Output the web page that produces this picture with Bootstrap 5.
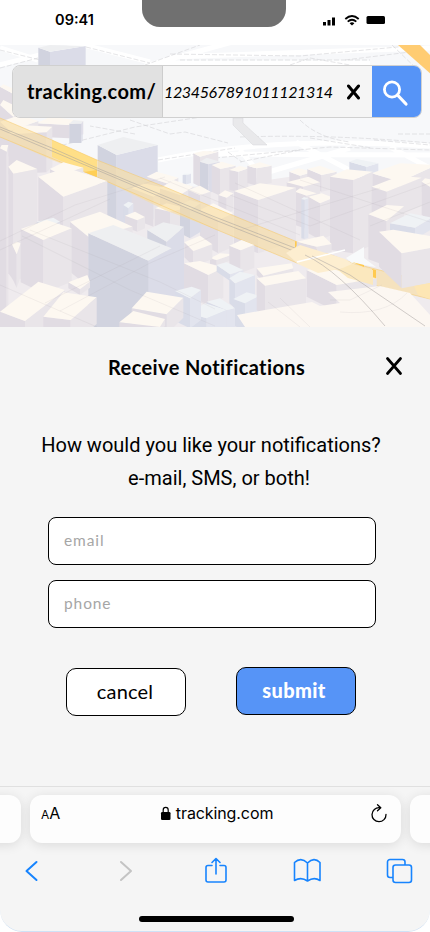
<!DOCTYPE html>
<html lang="en">
<head>
    <meta charset="UTF-8">
    <meta name="viewport" content="width=device-width, initial-scale=1.0">
    <title>Receive Notifications</title>
    <link href="https://cdn.jsdelivr.net/npm/bootstrap@5.3.0/dist/css/bootstrap.min.css" rel="stylesheet">
    <style>
        body {
            background-color: #fff;
            color: #000;
            font-family: Lato, "Liberation Sans", sans-serif;
        }
        .phone {
            width: 430px;
            height: 932px;
            border-radius: 0 0 22px 22px;
            background-color: #f5f5f5;
        }
        .status-bar {
            height: 45px;
            background-color: #fff;
        }
        .clock {
            width: 142px;
            padding-left: 7px;
            font: 600 14.5px/39px Inter, sans-serif;
        }
        .notch {
            width: 144px;
            height: 27px;
            background-color: #707070;
            border-radius: 0 0 18px 18px;
        }
        .signals {
            padding: 14px 44px 0 0;
        }
        .map-area {
            height: 282px;
            background-color: #f7f8fa;
        }
        .map-area > svg {
            display: block;
        }
        .search-bar {
            top: 20px;
            left: 12px;
            width: 410px;
            height: 53px;
            border: 1px solid #d0d0d0;
            border-radius: 8px;
            background-color: #f5f5f5;
        }
        .site-prefix {
            width: 150px;
            padding: 0 0 2px 14px;
            background-color: #e1e1e1;
            border-right: 1px solid #cdcdcd;
            font-size: 20px;
            font-weight: 700;
            letter-spacing: 0.4px;
        }
        .tracking-no {
            width: 183px;
            padding-left: 1px;
            font-size: 16px;
            font-style: italic;
            letter-spacing: -0.36px;
        }
        .search-btn {
            width: 49px;
            background-color: #5694f7;
        }
        .sheet {
            height: 459px;
        }
        .sheet-title {
            height: 80px;
            padding-left: 108px;
            padding-right: 27px;
            font-size: 20px;
            font-weight: 700;
            letter-spacing: 0.02em;
            line-height: 80px;
        }
        .sheet-title span {
            font-variant-ligatures: none;
        }
        .question {
            padding-top: 22px;
            font: 400 20px/33px Roboto, sans-serif;
        }
        .fields {
            padding: 22px 54px 0 48px;
            gap: 15px;
        }
        .fields .form-control {
            height: 48px;
            padding: 0 15px 2px;
            border: 1px solid #000;
            border-radius: 8px;
            font-size: 15.5px;
            letter-spacing: 0.9px;
        }
        .fields .form-control::placeholder {
            color: #a6a6a6;
        }
        .actions {
            padding: 39px 74px 0 66px;
        }
        .actions .btn {
            width: 120px;
            height: 48px;
            padding: 0 0 3px;
            border: 1px solid #000;
            border-radius: 10px;
            font-size: 20px;
        }
        .actions .btn-cancel {
            margin-top: 1px;
            padding-right: 2px;
            background-color: #fff;
            color: #000;
            letter-spacing: 0.2px;
        }
        .actions .btn-submit {
            padding-right: 4px;
            background-color: #5694f7;
            color: #fff;
            font-weight: 900;
            letter-spacing: 0.4px;
        }
        .browser-bar {
            height: 146px;
            border-top: 1px solid #e0e0e0;
            border-bottom: 1px solid #cfe2f7;
            border-radius: 0 0 22px 22px;
        }
        .tabs-row {
            gap: 9px;
            margin: 8px -29px 0;
        }
        .tab-card {
            width: 371px;
            height: 48px;
            border-radius: 12px;
            background-color: #fdfdfd;
            box-shadow: 0 2px 12px rgba(0, 0, 0, 0.11);
            font: 400 16px/37px Inter, sans-serif;
            letter-spacing: -0.1px;
            padding: 0 14px 0 11px;
        }
        .tab-side {
            width: 50px;
        }
        .small-a {
            font-size: 12px;
        }
        .tools {
            padding: 14px 17px 0;
        }
        .home-line {
            width: 155px;
            height: 6px;
            margin: 31px 0 0 139px;
            border-radius: 3px;
            background-color: #000;
        }
    </style>
</head>
<body>

<div class="phone overflow-hidden">
    <header class="status-bar d-flex">
        <div class="clock text-center">09:41</div>
        <div class="notch"></div>
        <div class="signals ms-auto">
            <svg class="d-block" width="63" height="13" viewBox="0 0 63 13">
                <path d="M0 8h3v3.500H0zM4.500 6h3v5.500h-3zM9 3.500h3v8H9z"/>
                <path d="M22.300 5Q29 -1 35.700 5M24.700 7.600Q29 3.800 33.300 7.600" fill="none" stroke="#000" stroke-width="1.800"/>
                <path d="M26.600 9.200Q29 7.300 31.400 9.200L29 11.500z"/>
                <rect x="43.500" y="2" width="18.500" height="8" rx="1.500"/>
            </svg>
        </div>
    </header>

    <section class="map-area position-relative overflow-hidden">
        <svg width="430" height="282" viewBox="0 45 430 282">
            <!-- streets behind the buildings -->
            <g fill="none" stroke="#fff" stroke-width="5">
                <path d="M-5 66L84 44M80 44L150 62M145 66L240 40M0 48L38 60M170 57L430 48M160 63H370"/>
                <path d="M158 160Q270 136 430 146M215 154L430 155M240 150L265 180M255 176L350 148M296 142L372 182M390 147L430 168"/>
            </g>
            <g fill="none" stroke="#d3d4d7" stroke-width="0.6" stroke-dasharray="5 2">
                <path d="M0 50L40 60M0 68L38 58M86 47L150 63M145 65L200 45M170 54L300 56L430 44M180 60H370M55 147L135 127L215 115M130 120L170 134L185 132L228 143M135 134L90 126M240 137Q330 134 430 143M158 160L235 148M215 158L330 147L430 150M228 152L242 162M310 138L372 148M300 120Q318 138 350 142M345 60L410 52M290 65L310 58L350 65M240 162L300 150M374 140L430 145M398 134H430"/>
                <path d="M408 45L430 66M392 45L422 74"/>
            </g>
            <path d="M233 118v7l20 20h14l-24-22v-5z" fill="#e9e9eb" stroke="#d6d7d9" stroke-width="0.5"/>
            <path d="M398 45h22l12 12v18z" fill="#ffcc72"/>
            <g id="buildingsBack" transform="translate(0 45) scale(0.33333)"></g>
            <!-- elevated highway -->
            <path d="M0 118L52 140L97 160L165 187L215 208L295 241L352 263L430 283V299L373 285L347 281L297 263L215 229L165 210L97 177L52 160L0 137z" fill="#f8dda0" fill-opacity="0.62"/>
            <path d="M52 140L97 160V177L52 157z" fill="#ffdf87"/>
            <path d="M84 172L97 170V177z" fill="#ffcf55"/>
            <path d="M0 118L52 140L97 160L165 187L215 208L295 241L352 263L430 283M0 137L97 177L215 229L297 263L373 285L430 299" fill="none" stroke="#f7c65f" stroke-opacity="0.8" stroke-width="0.6"/>
            <path d="M0 127L52 148L97 168L215 217L300 250M0 129L52 151L97 170L215 220L296 252" fill="none" stroke="#a9a49e" stroke-opacity="0.8" stroke-width="0.7"/>
            <path d="M346 258L364 247V258L376 267L352 263z" fill="#f8fafb"/>
            <path d="M295 241l4 2l-4 5zM372 269l4 1v14l-4 1zM352 262l12 3v2z" fill="#ffca4f"/>
            <g id="buildingsFront" transform="translate(0 45) scale(0.33333)"></g>
            <!-- wide low roofs along the lower edge -->
            <path d="M237 315L265 310L312 302L320 306L340 303L328 292L380 286L410 293L430 315V327H245z" fill="#fcf7f2"/>
            <path d="M286 253L300 245L345 259L356 266L318 273L298 264z" fill="#fdeed0"/>
            <path d="M352 264L373 270V285L348 278L338 270z" fill="#fbe8be"/>
            <path d="M414 286L430 283V299L418 295z" fill="#fde6b4"/>
            <path d="M297 262L345 250" stroke="#fff" stroke-width="1.500"/>
            <path d="M305 255Q338 270 385 326M312 256L350 275L425 326" fill="none" stroke="#aaa4a2" stroke-opacity="0.6" stroke-width="0.9"/>
            <!-- faint street lines that show through the blocks -->
            <path d="M0 241L75 205L165 177M0 250L110 199M22 236L130 290L215 326M30 230L160 282L215 309M60 311L150 263L215 235M45 303L160 246M160 178L300 235M230 195L310 226L430 183M240 230L380 188M235 183L360 240M0 285L60 311L97 327M268 302L300 327M280 298L310 327M330 300H350L382 285M340 312Q385 316 407 293M300 180L430 222M370 226L430 202" fill="none" stroke="#a89da5" stroke-opacity="0.16" stroke-width="0.8"/>
        </svg>

        <div class="search-bar position-absolute d-flex overflow-hidden">
            <div class="site-prefix d-flex align-items-center">tracking.com/</div>
            <div class="tracking-no d-flex align-items-center">1234567891011121314</div>
            <div class="d-flex align-items-center">
                <svg width="15" height="17" viewBox="0 0 15 17" fill="none" stroke="#000" stroke-width="3" stroke-linecap="round">
                    <path d="M2.500 3L12.500 15M12.500 3L2.500 15"/>
                </svg>
            </div>
            <div class="search-btn ms-auto d-flex align-items-center ps-2">
                <svg width="30" height="30" viewBox="0 0 30 30" fill="none" stroke="#fff">
                    <circle cx="12" cy="12.500" r="7.600" stroke-width="2.800"/>
                    <path d="M17.500 18L26 27" stroke-width="3.200" stroke-linecap="round"/>
                </svg>
            </div>
        </div>
    </section>

    <main class="sheet">
        <div class="sheet-title d-flex justify-content-between align-items-center">
            <span>Receive Notifications</span>
            <svg width="18" height="20" viewBox="0 0 18 20" fill="none" stroke="#000" stroke-width="2.700" stroke-linecap="round">
                <path d="M2.500 1.500L15.500 16.500M15.500 1.500L2.500 16.500"/>
            </svg>
        </div>
        <div class="question text-center">
            <div class="pe-2">How would you like your notifications?</div>
            <div class="ps-2">e-mail, SMS, or both!</div>
        </div>
        <form>
            <div class="fields d-flex flex-column">
                <input type="text" class="form-control" placeholder="email" aria-label="email">
                <input type="text" class="form-control" placeholder="phone" aria-label="phone">
            </div>
            <div class="actions d-flex justify-content-between">
                <button type="button" class="btn btn-cancel">cancel</button>
                <button type="button" class="btn btn-submit">submit</button>
            </div>
        </form>
    </main>

    <footer class="browser-bar overflow-hidden">
        <div class="tabs-row d-flex">
            <div class="tab-card tab-side flex-shrink-0"></div>
            <div class="tab-card flex-shrink-0 d-flex justify-content-between">
                <div><span class="small-a">A</span><span>A</span></div>
                <div class="d-flex ps-1">
                    <svg class="me-1" width="12" height="38" viewBox="0 0 12 38">
                        <rect x="1" y="17" width="9.500" height="8" rx="1.300"/>
                        <path d="M3.200 17v-2a2.500 2.700 0 0 1 5 0V17" fill="none" stroke="#000" stroke-width="1.200"/>
                    </svg>
                    <span>tracking.com</span>
                </div>
                <svg width="18" height="38" viewBox="0 0 18 38" fill="none" stroke="#000" stroke-width="1.300" stroke-linecap="round" stroke-linejoin="round">
                    <path d="M10.500 12.700A7 7 0 1 0 17 19.500M8.500 9.700L11.800 12.700L8.500 15.700"/>
                </svg>
            </div>
            <div class="tab-card tab-side flex-shrink-0"></div>
        </div>
        <div class="tools d-flex justify-content-between">
            <svg width="28" height="28" viewBox="0 0 28 28" fill="none" stroke="#1784fe" stroke-width="2" stroke-linecap="round" stroke-linejoin="round"><path d="M19.500 5L9.500 14L19.500 23"/></svg>
            <svg width="28" height="28" viewBox="0 0 28 28" fill="none" stroke="#c4c4c4" stroke-width="2" stroke-linecap="round" stroke-linejoin="round"><path d="M12 5L22 14L12 23"/></svg>
            <svg width="28" height="28" viewBox="-3 0 28 28" fill="none" stroke="#1784fe" stroke-width="1.600" stroke-linecap="round" stroke-linejoin="round"><path d="M8 8.500H4a2 2 0 0 0-2 2V23a2 2 0 0 0 2 2H20a2 2 0 0 0 2-2V10.500a2 2 0 0 0-2-2H16M12 17V1.500M8 5.500L12 1.500L16 5.500"/></svg>
            <svg width="28" height="28" viewBox="0 0 28 28" fill="none" stroke="#1784fe" stroke-width="1.600" stroke-linejoin="round"><path d="M14.500 6Q8-.5 1.500 5.500V23.500Q8 19.500 14.500 24Q21 19.500 27 23.500V5.500Q21-.5 14.500 6zM14.500 6V24"/></svg>
            <svg width="28" height="28" viewBox="0 0 28 28" fill="none" stroke="#1784fe" stroke-width="1.600"><rect x="8" y="8" width="18.500" height="17.500" rx="2.500"/><path d="M8 20.500H5A2.500 2.500 0 0 1 2.500 18V5A2.500 2.500 0 0 1 5 2.500H17.500A2.500 2.500 0 0 1 20 5V8"/></svg>
        </div>
        <div class="home-line"></div>
    </footer>
</div>

<script src="https://cdn.jsdelivr.net/npm/bootstrap@5.3.0/dist/js/bootstrap.bundle.min.js"></script>
<script>
    // roof, left wall, right wall
    const tones = {
        cream: ['#fdf8f1', '#e1dce3', '#e9e5e9'],
        blue: ['#eeeff1', '#d1d3df', '#dbdce8'],
        pale: ['#eff2f5', '#d9dce8', '#e2e4ee']
    };

    // Each block: roof corners (left, back, right, front), wall height, tone
    const back = [
        [[115,8, 150,0, 257,3, 150,20], 110, 'blue'],
        [[0,125, 10,118, 37,130, 36,145], 60, 'cream'],
        [[0,180, 10,165, 60,190, 40,215], 60, 'cream'],
        [[110,235, 150,215, 250,228, 208,240], 40, 'cream'],
        [[208,236, 220,225, 248,228, 244,236], 58, 'blue'],
        [[0,230, 60,210, 115,228, 30,258], 80, 'cream'],
        [[25,268, 60,240, 157,245, 140,262], 120, 'cream'],
        [[293,300, 370,276, 473,300, 350,330], 220, 'blue'],
        [[440,395, 470,380, 535,398, 500,415], 40, 'cream'],
        [[548,390, 552,386, 573,386, 560,390], 28, 'pale'],
        [[580,325, 610,318, 655,320, 600,335], 90, 'cream'],
        [[600,350, 620,338, 660,350, 625,358], 85, 'blue'],
        [[635,360, 665,350, 707,362, 660,372], 80, 'cream'],
        [[688,375, 720,362, 745,370, 715,380], 60, 'cream'],
        [[742,362, 780,352, 815,362, 770,370], 52, 'cream'],
        [[868,380, 895,370, 940,380, 900,392], 40, 'cream'],
        [[922,372, 960,362, 1010,380, 965,390], 50, 'cream'],
        [[1048,350, 1070,342, 1135,355, 1100,365], 28, 'pale'],
        [[1115,385, 1200,355, 1310,360, 1200,410], 60, 'cream'],
        [[395,430, 430,415, 500,430, 460,455], 90, 'cream'],
        [[480,430, 520,405, 580,425, 540,450], 70, 'cream'],
        [[565,435, 600,422, 632,440, 600,450], 60, 'cream'],
        [[655,450, 675,436, 700,445, 680,458], 50, 'cream'],
        [[860,412, 925,395, 960,412, 910,425], 50, 'cream'],
        [[885,440, 900,430, 950,445, 920,452], 100, 'cream'],
        [[925,455, 965,445, 1000,458, 960,475], 110, 'cream'],
        [[904,462, 912,456, 925,460, 914,464], 118, 'pale'],
        [[702,438, 780,415, 888,428, 775,465], 160, 'cream'],
        [[990,395, 1040,373, 1118,380, 1060,405], 220, 'cream'],
        [[1115,425, 1200,392, 1265,398, 1160,440], 85, 'cream'],
        [[1265,410, 1275,400, 1300,405, 1290,425], 100, 'cream'],
        [[370,480, 385,470, 400,475, 385,490], 40, 'pale'],
        [[465,490, 500,475, 560,490, 510,500], 60, 'cream'],
        [[600,495, 640,475, 700,505, 655,525], 100, 'cream'],
        [[540,480, 570,465, 602,475, 570,495], 85, 'blue']
    ];
    const front = [
        [[0,310, 5,300, 25,300, 20,320], 500, 'cream'],
        [[25,365, 50,345, 112,372, 40,386], 320, 'cream'],
        [[150,372, 190,352, 250,368, 180,388], 20, 'cream'],
        [[115,395, 200,368, 322,408, 190,455], 170, 'cream'],
        [[375,512, 405,500, 435,516, 412,526], 34, 'cream'],
        [[210,530, 300,500, 398,545, 265,575], 150, 'cream'],
        [[110,530, 160,518, 180,530, 140,545], 20, 'pale'],
        [[630,640, 660,625, 700,628, 650,645], 16, 'cream'],
        [[553,592, 600,572, 637,598, 580,618], 45, 'cream'],
        [[552,655, 600,648, 670,668, 625,690], 90, 'cream'],
        [[442,555, 490,532, 552,545, 500,590], 230, 'blue'],
        [[36,598, 50,590, 62,595, 50,628], 100, 'cream'],
        [[62,552, 140,525, 215,550, 130,585], 160, 'cream'],
        [[265,565, 340,540, 515,610, 445,647], 280, 'blue'],
        [[688,602, 725,585, 763,600, 722,616], 68, 'cream'],
        [[650,660, 680,652, 730,675, 690,688], 20, 'pale'],
        [[688,700, 720,680, 765,690, 705,715], 75, 'pale'],
        [[700,762, 740,742, 778,752, 735,775], 80, 'pale'],
        [[620,770, 660,760, 705,790, 680,795], 60, 'pale'],
        [[568,805, 615,775, 680,795, 620,820], 60, 'pale'],
        [[525,738, 575,725, 603,735, 570,760], 90, 'pale'],
        [[890,590, 970,572, 995,597, 950,605], 24, 'cream'],
        [[920,675, 960,665, 1130,700, 1010,720], 80, 'cream'],
        [[770,670, 875,655, 880,670, 790,692], 20, 'cream'],
        [[770,700, 895,678, 918,700, 795,722], 95, 'cream'],
        [[1105,508, 1160,480, 1212,484, 1160,528], 135, 'cream'],
        [[1170,535, 1230,505, 1295,518, 1245,548], 35, 'pale'],
        [[1137,560, 1180,554, 1390,590, 1205,625], 105, 'cream'],
        [[205,712, 262,690, 270,710, 240,732], 18, 'cream'],
        [[0,800, 115,710, 195,735, 75,828], 60, 'cream'],
        [[130,815, 190,742, 290,757, 212,825], 80, 'cream'],
        [[395,790, 440,740, 550,758, 500,808], 60, 'cream'],
        [[358,832, 400,798, 495,822, 480,846], 20, 'cream']
    ];

    function drawBlocks(target, blocks) {
        let markup = '';
        blocks.forEach(([r, h, tone]) => {
            const [roof, left, right] = tones[tone];
            markup += `<path fill="${left}" d="M${r[0]} ${r[1]}L${r[6]} ${r[7]}V${r[7] + h}L${r[0]} ${r[1] + h}z"/>`;
            markup += `<path fill="${right}" d="M${r[6]} ${r[7]}L${r[4]} ${r[5]}V${r[5] + h}L${r[6]} ${r[7] + h}z"/>`;
            markup += `<path fill="${roof}" d="M${r[0]} ${r[1]}L${r[2]} ${r[3]}L${r[4]} ${r[5]}L${r[6]} ${r[7]}z"/>`;
        });
        target.innerHTML += markup;
    }

    const backGroup = document.getElementById('buildingsBack');
    const frontGroup = document.getElementById('buildingsFront');

    // The ground between the blocks is shaded by the walls around it
    backGroup.innerHTML = '<path fill="#efebee" d="M0 240L155 300L290 385L480 400L580 425L700 420L870 395L1120 400L1290 390V846H0z"/>';
    drawBlocks(backGroup, back);
    drawBlocks(frontGroup, front);
</script>

</body>
</html>
